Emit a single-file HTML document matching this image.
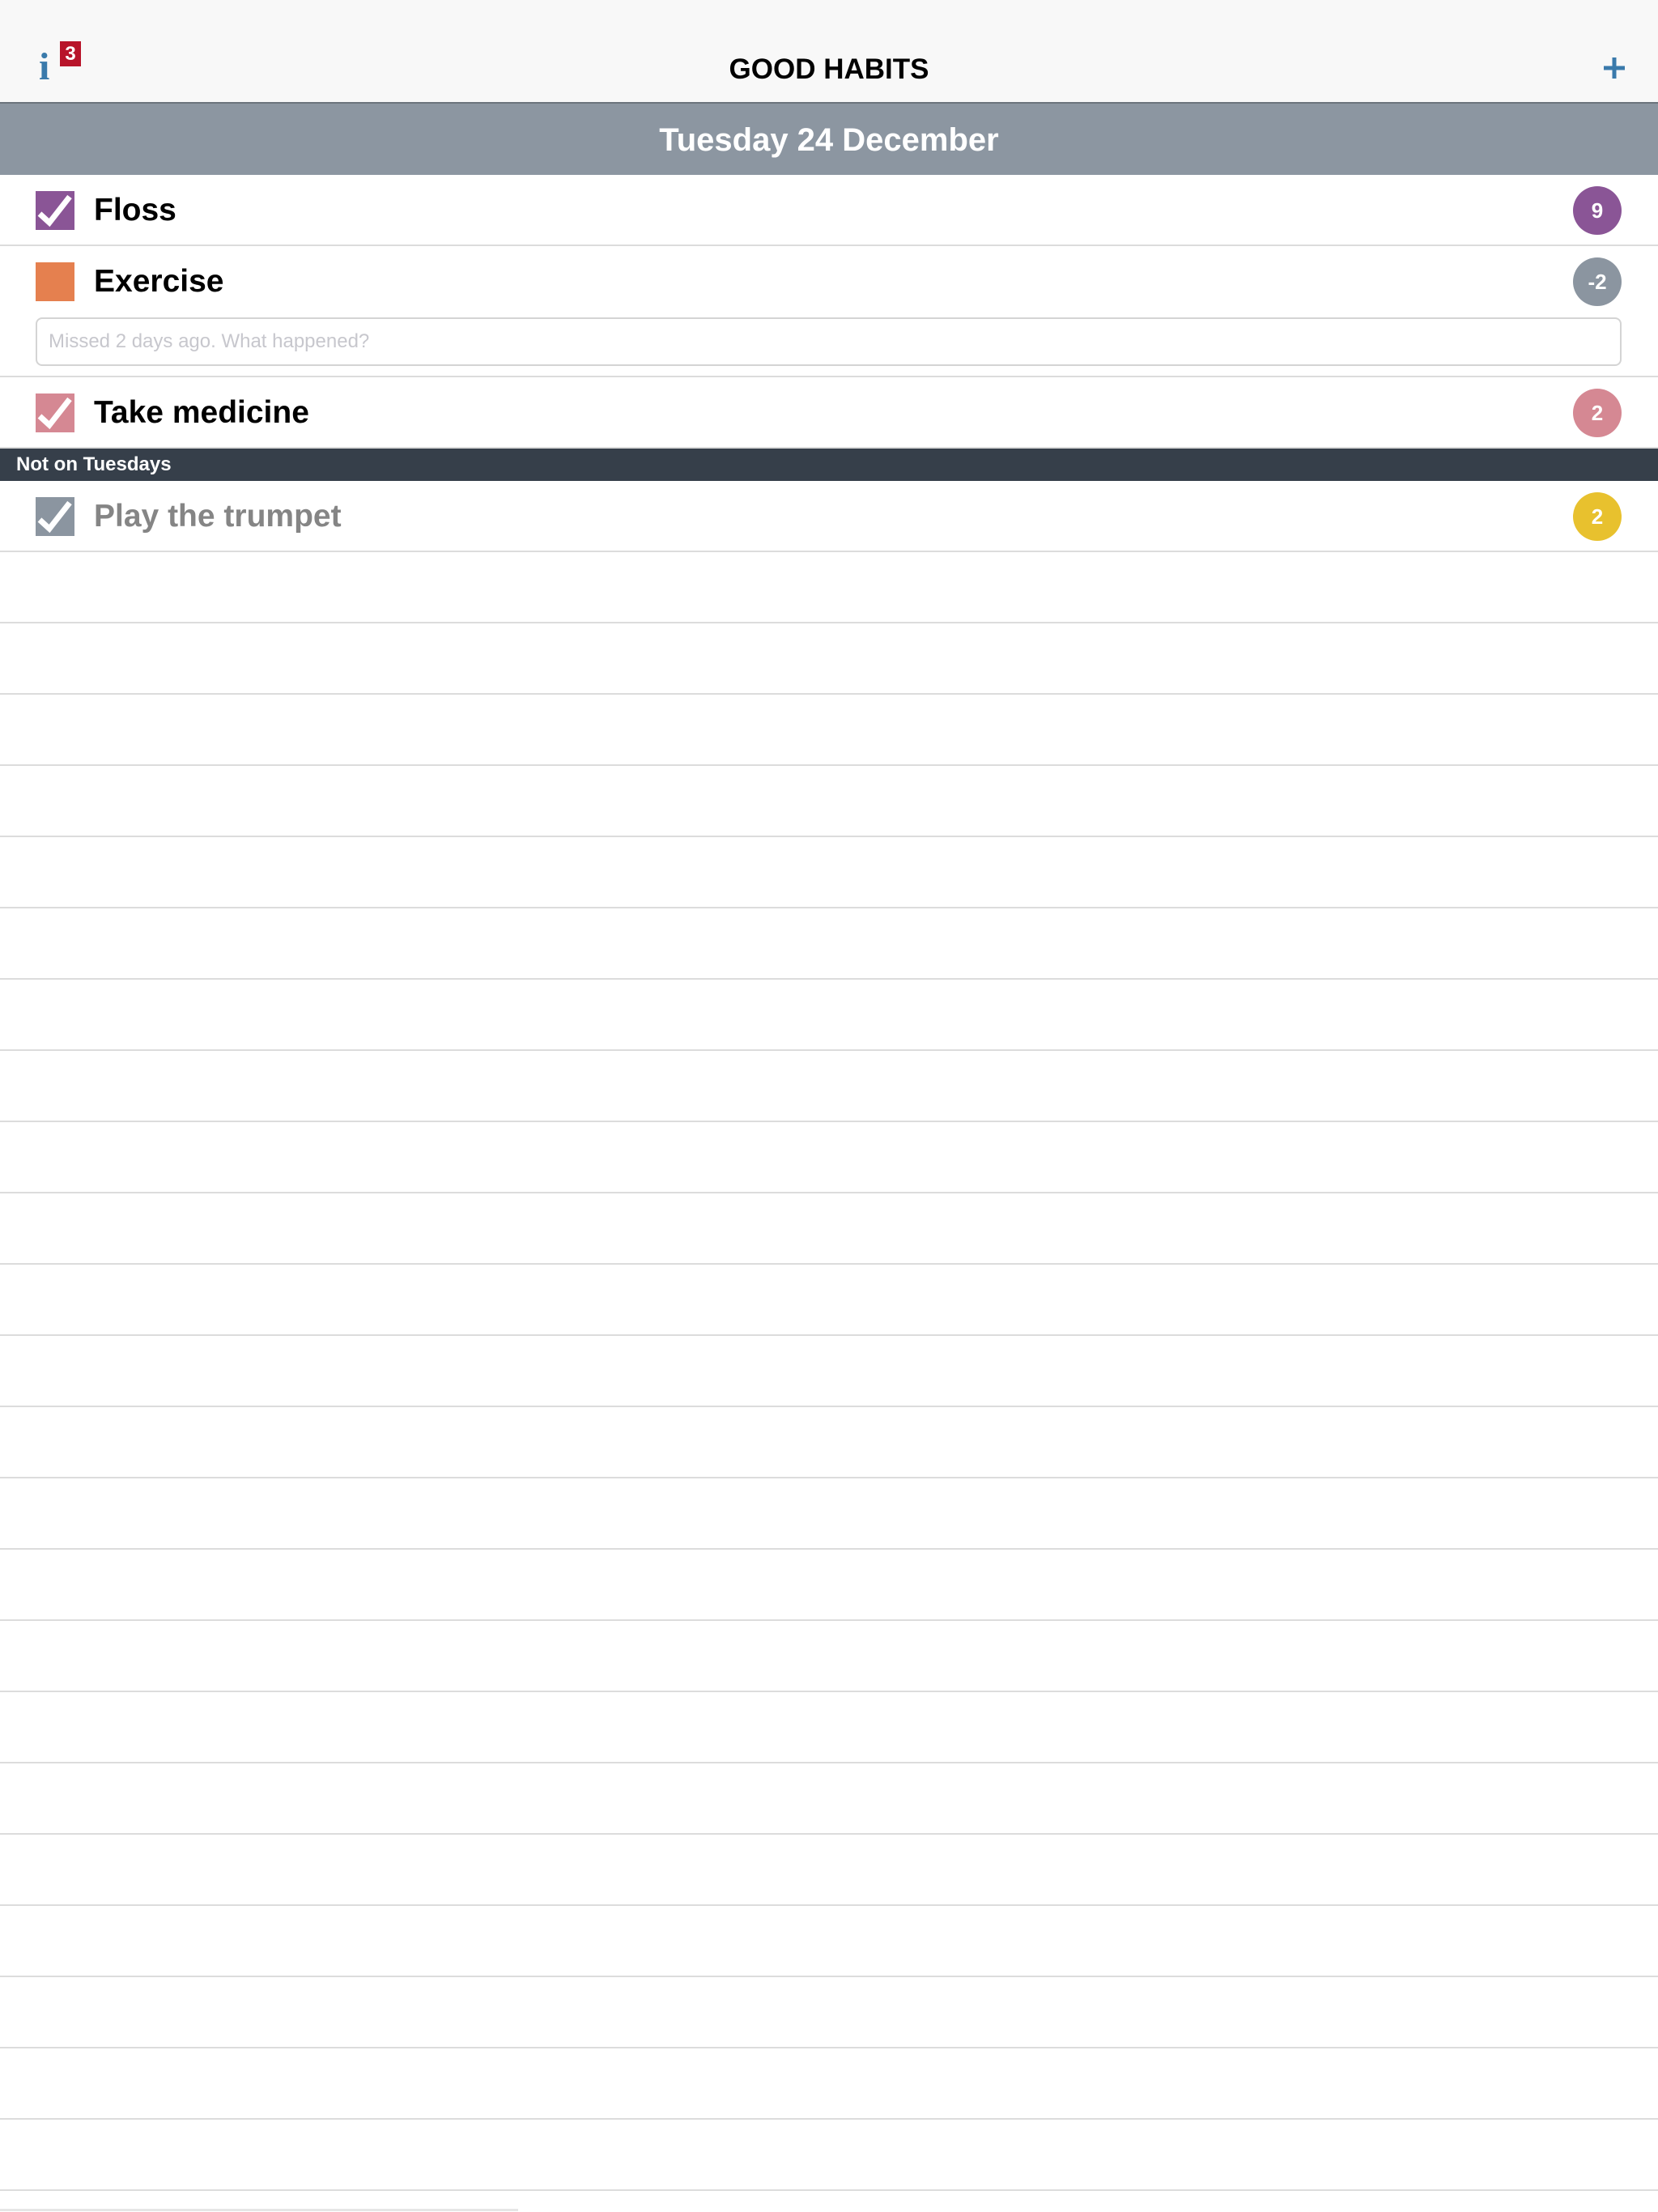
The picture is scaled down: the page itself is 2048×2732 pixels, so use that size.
<!DOCTYPE html>
<html><head><meta charset="utf-8"><style>
*{margin:0;padding:0;box-sizing:border-box}
body{width:2048px;height:2732px;background:#fff;font-family:"Liberation Sans",Arial,sans-serif;position:relative;overflow:hidden}
.nav{position:absolute;left:0;top:0;width:2048px;height:128px;background:#f8f8f8;border-bottom:2px solid #6b737c}
.title{position:absolute;top:66px;width:100%;text-align:center;font-weight:bold;font-size:35px;color:#000}
.date{position:absolute;top:128px;left:0;width:2048px;height:88px;background:#8c96a1;color:#fff;font-weight:bold;font-size:40px;text-align:center;line-height:90px}
.row{position:absolute;left:0;width:2048px;height:88px;border-bottom:2px solid #dcdcdc}
.cb{position:absolute;left:44px;top:20px;width:48px;height:48px}
.name{position:absolute;left:116px;top:0;line-height:88px;font-size:39px;font-weight:bold;color:#000}
.badge{position:absolute;left:1943px;top:14px;width:60px;height:60px;border-radius:50%;color:#fff;font-weight:bold;font-size:26px;text-align:center;line-height:60px}
.sec{position:absolute;left:0;top:554px;width:2048px;height:40px;background:#363f4a;color:#fff;font-weight:bold;font-size:24px;line-height:40px;padding-left:20px}
.inp{position:absolute;left:44px;top:392px;width:1959px;height:60px;border:2px solid #d4d4d4;border-radius:8px;color:#c7c7cd;font-size:24px;line-height:56px;padding-left:14px}
</style></head><body>
<div class="nav">
 <div style="position:absolute;left:48px;top:59px;font-family:'Liberation Serif',serif;font-weight:bold;font-size:48px;color:#3a7aab;line-height:48px">i</div>
 <div style="position:absolute;left:74px;top:51px;width:26px;height:31px;background:#b8142a;color:#fff;font-weight:bold;font-size:24px;text-align:center;line-height:31px">3</div>
 <div class="title">GOOD HABITS</div>
 <svg style="position:absolute;left:1981px;top:71px" width="26" height="26"><path d="M0 13H26M13 0V26" stroke="#3a7aab" stroke-width="5"/></svg>
</div>
<div class="date">Tuesday 24 December</div>

<div class="row" style="top:216px">
 <svg class="cb" viewBox="0 0 48 48"><rect width="48" height="48" fill="#8a5596"/><path d="M5 28L17 39L42 7" stroke="#fff" stroke-width="7" fill="none"/></svg>
 <div class="name">Floss</div>
 <div class="badge" style="background:#8a5596">9</div>
</div>
<div class="row" style="top:304px;height:162px">
 <svg class="cb" viewBox="0 0 48 48"><rect width="48" height="48" fill="#e5804f"/></svg>
 <div class="name">Exercise</div>
 <div class="badge" style="background:#8b95a0">-2</div>
</div>
<div class="inp">Missed 2 days ago. What happened?</div>
<div class="row" style="top:466px">
 <svg class="cb" viewBox="0 0 48 48"><rect width="48" height="48" fill="#d58893"/><path d="M5 28L17 39L42 7" stroke="#fff" stroke-width="7" fill="none"/></svg>
 <div class="name">Take medicine</div>
 <div class="badge" style="background:#d58893">2</div>
</div>
<div class="sec">Not on Tuesdays</div>
<div class="row" style="top:594px">
 <svg class="cb" viewBox="0 0 48 48"><rect width="48" height="48" fill="#8b95a0"/><path d="M5 28L17 39L42 7" stroke="#fff" stroke-width="7" fill="none"/></svg>
 <div class="name" style="color:#858585">Play the trumpet</div>
 <div class="badge" style="background:#e8c12e">2</div>
</div>
<div id="lines"></div>
<div style="position:absolute;left:0;top:2728px;width:640px;height:3px;background:#e6e6e6"></div>
<script>
var h='';for(var k=1;k<=23;k++){h+='<div style="position:absolute;left:0;top:'+(682+88*k-2)+'px;width:2048px;height:2px;background:#dcdcdc"></div>';}
document.getElementById('lines').innerHTML=h;
</script>
</body></html>
